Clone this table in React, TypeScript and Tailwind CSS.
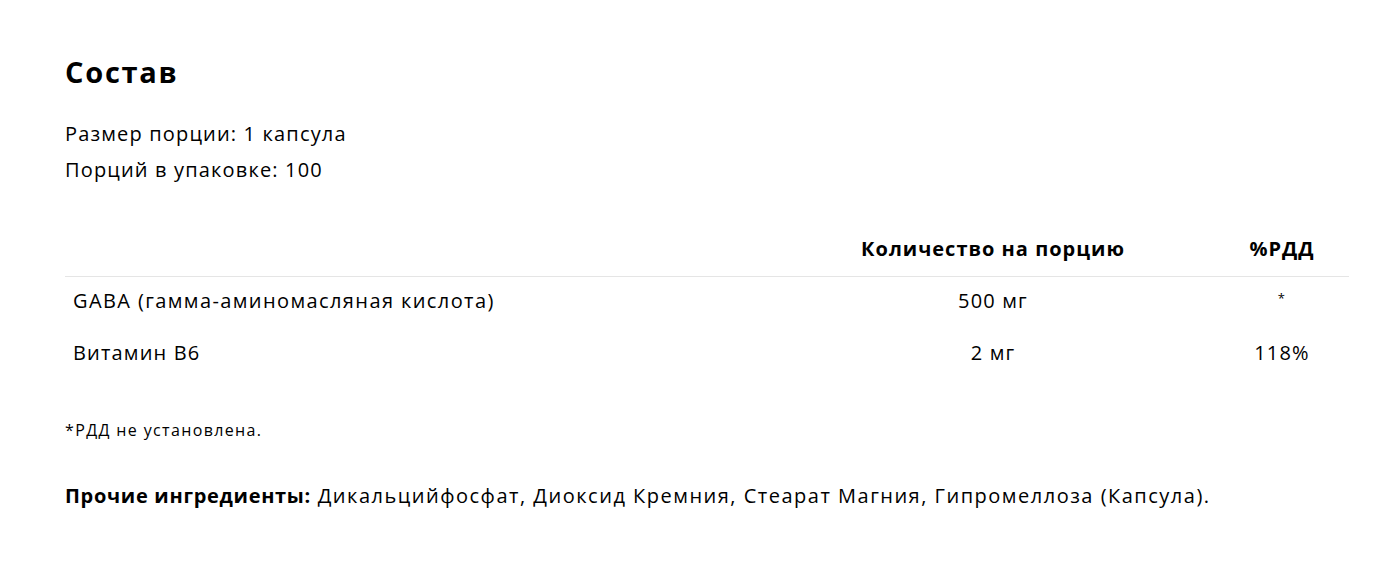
export default function App() {
  const font = { fontFamily: '"Open Sans", sans-serif' };
  return (
    <div className="w-[1375px] h-[563px] bg-white text-black pl-[65px] pr-[26px] pt-[52px]" style={font}>
      <h2 className="text-[29px] font-bold leading-[40px] tracking-[0.06em]">Состав</h2>
      <div className="mt-[24px] text-[20px] leading-[36px] tracking-[0.058em]">
        <p>Размер порции: 1 капсула</p>
        <p>Порций в упаковке: 100</p>
      </div>
      <table className="mt-[46px] w-full border-collapse text-[20px] tracking-[0.058em]">
        <thead>
          <tr className="border-b border-[#e5e5e5]">
            <th className="w-[706px]"></th>
            <th className="w-[444px] text-[20px] font-bold h-[42px] align-top pt-[0px] text-center tracking-[0.05em]">Количество на порцию</th>
            <th className="text-[20px] font-bold align-top pt-[0px] text-center tracking-[0.05em]">%РДД</th>
          </tr>
        </thead>
        <tbody>
          <tr className="h-[50px]">
            <td className="pl-[8px] tracking-[0.07em]">GABA (гамма-аминомасляная кислота)</td>
            <td className="text-center">500 мг</td>
            <td className="text-center text-[13px] align-top pt-[12px]">*</td>
          </tr>
          <tr className="h-[54px]">
            <td className="pl-[8px]">Витамин B6</td>
            <td className="text-center">2 мг</td>
            <td className="text-center">118%</td>
          </tr>
        </tbody>
      </table>
      <p className="mt-[38px] text-[16px] leading-[24px] tracking-[0.085em]">*РДД не установлена.</p>
      <p className="mt-[40px] text-[20px] leading-[28px] tracking-[0.075em]"><b className="tracking-[0.035em]">Прочие ингредиенты:</b> Дикальцийфосфат, Диоксид Кремния, Стеарат Магния, Гипромеллоза (Капсула).</p>
    </div>
  );
}
